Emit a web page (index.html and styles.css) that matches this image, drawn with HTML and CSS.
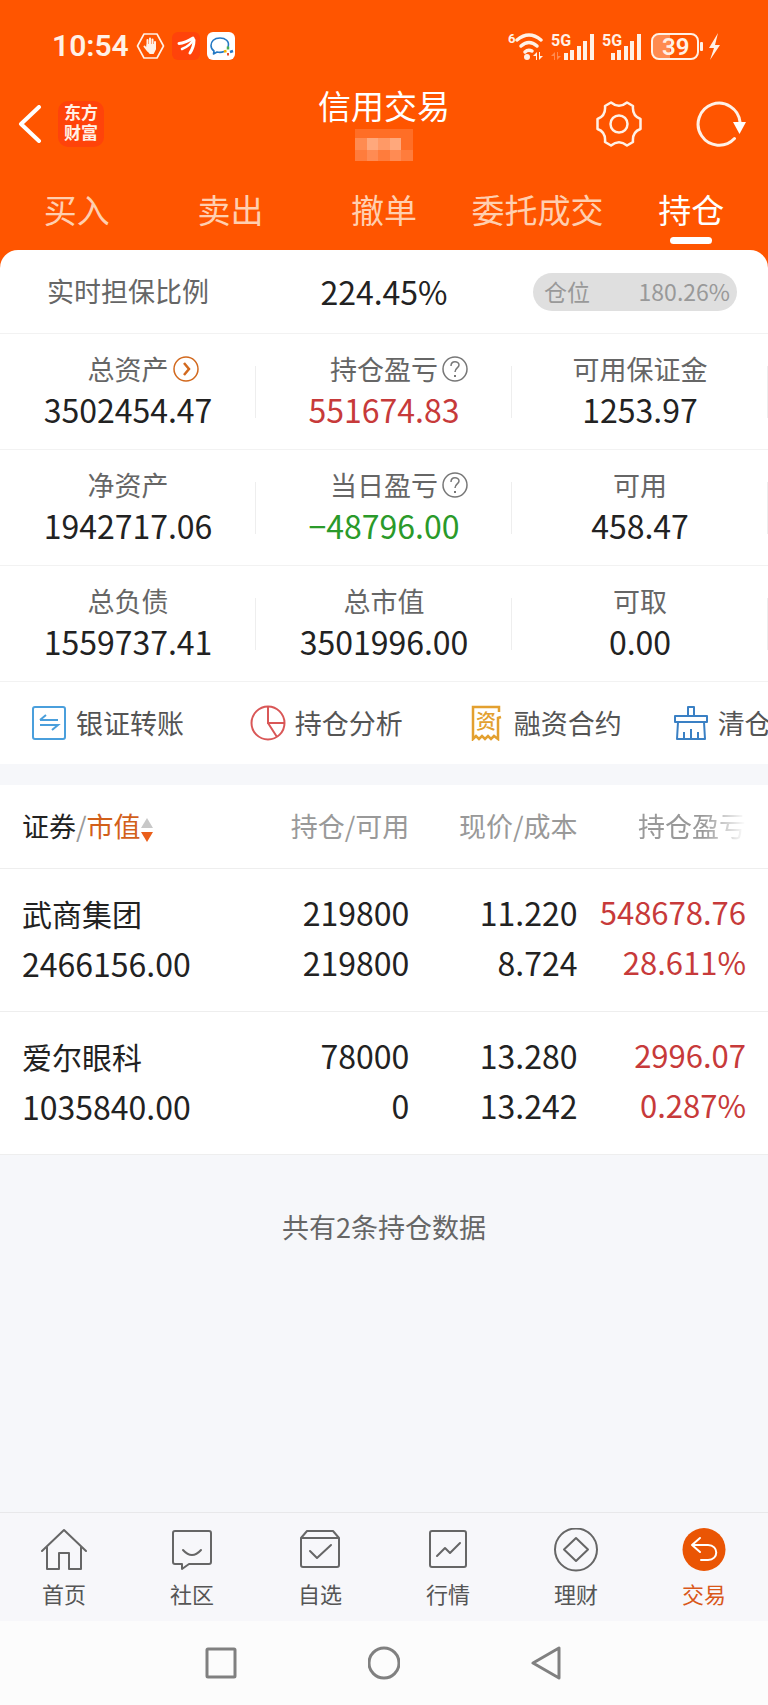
FILE: index.html
```html
<!DOCTYPE html>
<html lang="zh-CN">
<head>
    <meta charset="UTF-8">
    <meta name="viewport" content="width=device-width, initial-scale=1.0">
    <title>信用交易</title>
    <link rel="stylesheet" href="styles.css">
</head>
<body>
    <header class="header">
        <div class="status-bar">
            <div class="status-left">
                <span class="clock">10:54</span>
                <svg width="29" height="28" viewBox="0 0 29 28" fill="none" stroke="#fff1e6" stroke-linejoin="round" stroke-linecap="round">
                    <path d="M8 2h13l6.500 12L21 26H8L1.500 14z" stroke-width="1.600"/>
                    <path d="M11.500 8v7M14 6.500V15M16.500 7.500V15M19 10v6" stroke-width="2"/>
                    <path d="M8.500 14.500l3.500 4.500M11.500 13h7.500v4l-2 4h-3l-3-4z" stroke-width="2" fill="#fff1e6"/>
                </svg>
                <svg width="28" height="28" viewBox="0 0 28 28">
                    <rect width="28" height="28" rx="6" fill="#ff430a"/>
                    <g fill="none" stroke="#fff" stroke-linecap="round">
                        <path d="M7 11.500Q13 11 21 6" stroke-width="3"/>
                        <path d="M10 17Q18 14 21.500 7" stroke-width="2.500"/>
                        <path d="M18 21Q22 15 22 8" stroke-width="3"/>
                    </g>
                </svg>
                <svg width="28" height="28" viewBox="0 0 28 28" fill="none">
                    <rect width="28" height="28" rx="6" fill="#fff"/>
                    <path d="M21 15C23 9 18 6 13 6C7 6 4 9.500 4 13.500c0 3 1.500 4.500 3 5.500l-.5 3l3.500-2c3 .7 5 .4 7-.5" stroke="#2479c4" stroke-width="1.600" stroke-linejoin="round"/>
                    <path d="M21 14.500v3" stroke="#4caf50" stroke-width="2.500"/>
                    <path d="M23 20l3-1" stroke="#2479c4" stroke-width="2.500"/>
                    <path d="M21 21v2.500" stroke="#e8502d" stroke-width="2"/>
                    <path d="M17 19.500l2.500-.5" stroke="#f5b400" stroke-width="2.500"/>
                </svg>
            </div>
            <svg class="status-right" width="214" height="30" viewBox="0 0 214 30" fill="#fff1e6">
                <text x="0" y="12" font-size="13" font-weight="700">6</text>
                <g fill="none" stroke="#fff1e6" stroke-width="3.500" stroke-linecap="round">
                    <path d="M9 9Q21 -1 33 9"/>
                    <path d="M13 15Q21 8 29 15"/>
                    <path d="M17 21Q20 18 24 20"/>
                </g>
                <circle cx="19" cy="26" r="3"/>
                <path d="M25 25l4-4v8h-1v-4zM35 25l-4 4v-8h1v4z"/>
                <text x="43" y="15" font-size="16" font-weight="700">5G</text>
                <path d="M43 25l4-4v8h-1v-4zM53 25l-4 4v-8h1v4z" opacity=".35"/>
                <path d="M56 22h4v7h-4zM62 19h4v10h-4zM69 15h4v14h-4zM75 10h4v19h-4zM82 3h4v26h-4z"/>
                <text x="94" y="15" font-size="16" font-weight="700">5G</text>
                <path d="M103 22h4v7h-4zM109 19h4v10h-4zM116 15h4v14h-4zM122 10h4v19h-4zM129 3h4v26h-4z"/>
                <path d="M151 4h11v24h-11q-6 0-6-6V10q0-6 6-6z" opacity=".35"/>
                <rect x="144" y="3" width="46" height="25" rx="7" fill="none" stroke="#fff1e6" stroke-width="2"/>
                <text x="154" y="24" font-size="24" font-weight="600">39</text>
                <rect x="192" y="11" width="3" height="9" rx="1"/>
                <path d="M210 2l-9 15h5l-4 12l10-15h-5z"/>
            </svg>
        </div>

        <div class="app-bar">
            <div class="app-left">
                <button class="icon-btn" type="button" aria-label="返回">
                    <svg width="24" height="38" viewBox="0 0 24 38" fill="none" stroke="#fff" stroke-width="4" stroke-linecap="round" stroke-linejoin="round">
                        <path d="M21 2L3 19l18 17"/>
                    </svg>
                </button>
                <a class="brand" href="#">东方<br>财富</a>
            </div>
            <div class="app-title">
                <h1>信用交易</h1>
                <svg width="58" height="34" viewBox="0 0 58 34" fill="#fff" shape-rendering="crispEdges">
                    <path d="M0 2h58v32H0z" opacity=".15"/>
                    <path d="M0 11h46v12H0z" opacity=".2"/>
                    <path d="M0 23h58v11H0z" opacity=".1"/>
                    <path d="M12 11h11v12H12zM35 11h11v12H35z" opacity=".25"/>
                    <path d="M23 11h12v12H23zM12 23h11v11H12zM35 23h11v11H35z" opacity=".12"/>
                </svg>
            </div>
            <div class="app-actions">
                <button class="icon-btn" type="button" aria-label="设置">
                    <svg width="46" height="46" viewBox="0 0 46 46" fill="none" stroke="#fff1e6" stroke-width="2.500" stroke-linejoin="round">
                        <path d="M15 1.500Q23 8 31 1.500L37 5Q36 15 44.500 18V28Q36 31 37 41L31 44.500Q23 38 15 44.500L9 41Q10 31 1.500 28V18Q10 15 9 5z"/>
                        <circle cx="23" cy="23" r="8.500"/>
                    </svg>
                </button>
                <button class="icon-btn" type="button" aria-label="刷新">
                    <svg width="50" height="46" viewBox="0 0 50 46">
                        <path d="M38.500 37.500A21 21 0 1 1 44 21" fill="none" stroke="#fff1e6" stroke-width="3" stroke-linecap="round"/>
                        <path d="M37 21h13l-6.500 12z" fill="#fff"/>
                    </svg>
                </button>
            </div>
        </div>

        <nav class="tabs">
            <a href="#">买入</a>
            <a href="#">卖出</a>
            <a href="#">撤单</a>
            <a href="#">委托成交</a>
            <a href="#" class="active">持仓</a>
        </nav>
    </header>

    <main>
        <section class="summary">
            <div class="ratio-row">
                <span class="label">实时担保比例</span>
                <span class="value">224.45%</span>
                <div class="position-cell">
                    <div class="position-pill"><span>仓位</span><span>180.26%</span></div>
                </div>
            </div>
            <div class="stat-row">
                <div class="stat">
                    <div class="label">总资产
                        <svg class="hint" width="26" height="26" viewBox="0 0 26 26" fill="none" stroke="#d2691e">
                            <circle cx="13" cy="13" r="12" stroke-width="1.500"/>
                            <path d="M11 7l5 6l-5 6" stroke-width="2.500"/>
                        </svg>
                    </div>
                    <div class="value">3502454.47</div>
                </div>
                <div class="stat">
                    <div class="label">持仓盈亏
                        <svg class="hint" width="26" height="26" viewBox="0 0 26 26" fill="none" stroke="#777" stroke-width="1.500">
                            <circle cx="13" cy="13" r="12"/>
                            <path d="M9 10c0-6 8-5 8-1c0 3-4 3-4 7"/>
                            <path d="M13 19v2" stroke-width="2"/>
                        </svg>
                    </div>
                    <div class="value up">551674.83</div>
                </div>
                <div class="stat">
                    <div class="label">可用保证金</div>
                    <div class="value">1253.97</div>
                </div>
            </div>
            <div class="stat-row">
                <div class="stat">
                    <div class="label">净资产</div>
                    <div class="value">1942717.06</div>
                </div>
                <div class="stat">
                    <div class="label">当日盈亏
                        <svg class="hint" width="26" height="26" viewBox="0 0 26 26" fill="none" stroke="#777" stroke-width="1.500">
                            <circle cx="13" cy="13" r="12"/>
                            <path d="M9 10c0-6 8-5 8-1c0 3-4 3-4 7"/>
                            <path d="M13 19v2" stroke-width="2"/>
                        </svg>
                    </div>
                    <div class="value down">−48796.00</div>
                </div>
                <div class="stat">
                    <div class="label">可用</div>
                    <div class="value">458.47</div>
                </div>
            </div>
            <div class="stat-row">
                <div class="stat">
                    <div class="label">总负债</div>
                    <div class="value">1559737.41</div>
                </div>
                <div class="stat">
                    <div class="label">总市值</div>
                    <div class="value">3501996.00</div>
                </div>
                <div class="stat">
                    <div class="label">可取</div>
                    <div class="value">0.00</div>
                </div>
            </div>
            <div class="shortcuts">
                <a href="#">
                    <svg width="36" height="36" viewBox="0 0 36 36" fill="none" stroke="#4a9fdc" stroke-width="2">
                        <rect x="2" y="2" width="32" height="32" rx="2"/>
                        <path d="M9 15h18M9 15l6-5M9 20h18l-6 5"/>
                    </svg>
                    银证转账
                </a>
                <a href="#">
                    <svg width="36" height="36" viewBox="0 0 36 36" fill="none" stroke="#d95757" stroke-width="2">
                        <circle cx="18" cy="18" r="16.500"/>
                        <path d="M18 1.500V18h16.500M18 18l9 14"/>
                    </svg>
                    持仓分析
                </a>
                <a href="#">
                    <svg width="36" height="36" viewBox="0 0 36 36" fill="none" stroke="#e3a02f" stroke-width="2.500">
                        <path d="M30 7V2H4v32l3-3l3 3l3-3l3 3l3-3l3 3l3-3l4 3V13l3-1"/>
                        <text x="7" y="24" font-size="20" font-weight="500" fill="#e3a02f" stroke="none">资</text>
                    </svg>
                    融资合约
                </a>
                <a href="#" class="shortcut-last">
                    <svg width="36" height="36" viewBox="0 0 36 36" fill="none" stroke="#3a80c4" stroke-width="2" stroke-linejoin="round">
                        <path d="M15 11V2h6v9M2 11h32v6H2zM5 17L4 34h28L31 17M11 34v-7M18 34V24M25 34v-7"/>
                    </svg>
                    清仓
                </a>
            </div>
        </section>

        <section class="holdings">
            <table>
                <thead>
                    <tr>
                        <th>
                            <span class="strong">证券</span>/<span class="sort">市值</span><svg width="12" height="26" viewBox="0 0 12 26">
                                <path d="M6 1l6 10H0z" fill="#c8c8c8"/>
                                <path d="M0 15h12L6 25z" fill="#ea5f1b"/>
                            </svg>
                        </th>
                        <th>持仓/可用</th>
                        <th>现价/成本</th>
                        <th><span class="fade">持仓盈亏</span></th>
                    </tr>
                </thead>
                <tbody>
                    <tr>
                        <td><span class="name">武商集团</span><br>2466156.00</td>
                        <td>219800<br>219800</td>
                        <td>11.220<br>8.724</td>
                        <td class="up">548678.76<br>28.611%</td>
                    </tr>
                    <tr>
                        <td><span class="name">爱尔眼科</span><br>1035840.00</td>
                        <td>78000<br>0</td>
                        <td>13.280<br>13.242</td>
                        <td class="up">2996.07<br>0.287%</td>
                    </tr>
                </tbody>
            </table>
        </section>
        <p class="total">共有2条持仓数据</p>
    </main>

    <nav class="bottom-nav">
        <a href="#">
            <svg width="46" height="44" viewBox="0 0 46 44">
                <path d="M1 23L23 2l22 21M6 19v22h12V25h10v16h12V19"/>
            </svg>
            首页
        </a>
        <a href="#">
            <svg width="46" height="44" viewBox="0 0 46 44">
                <path d="M6 3h34q2 0 2 2v29q0 2-2 2H20l-7 5v-5H6q-2 0-2-2V5q0-2 2-2z"/>
                <path d="M14 22q9 10 18 0" stroke-width="2"/>
            </svg>
            社区
        </a>
        <a href="#">
            <svg width="46" height="44" viewBox="0 0 46 44">
                <path d="M10 3h26l6 7v27q0 2-2 2H6q-2 0-2-2V10zM4 10h38"/>
                <path d="M13 23l7 7l14-13" stroke-width="2"/>
            </svg>
            自选
        </a>
        <a href="#">
            <svg width="46" height="44" viewBox="0 0 46 44">
                <rect x="5" y="3" width="36" height="36" rx="2"/>
                <path d="M12 28l8-8l5 5l10-10" stroke-width="2"/>
            </svg>
            行情
        </a>
        <a href="#">
            <svg width="46" height="44" viewBox="0 0 46 44">
                <circle cx="23" cy="21.500" r="21"/>
                <path d="M23 10l12 11.500L23 33L11 21.500z"/>
            </svg>
            理财
        </a>
        <a href="#" class="active">
            <svg width="46" height="44" viewBox="0 0 46 44">
                <circle cx="23" cy="21.500" r="21.500" fill="#ea5504" stroke="none"/>
                <path d="M19 10l-8 7l8 7M11 17h16c11 0 11 15 0 15h-7" stroke="#fff" stroke-width="2"/>
            </svg>
            交易
        </a>
    </nav>

    <div class="system-nav">
        <button class="icon-btn" type="button" aria-label="最近任务">
            <svg width="32" height="34" viewBox="0 0 32 34"><rect x="2" y="3" width="28" height="28" rx="1"/></svg>
        </button>
        <button class="icon-btn" type="button" aria-label="主屏幕">
            <svg width="32" height="34" viewBox="0 0 32 34"><circle cx="16" cy="17" r="15"/></svg>
        </button>
        <button class="icon-btn" type="button" aria-label="后退">
            <svg width="32" height="34" viewBox="0 0 32 34"><path d="M28 2v30L2 17z"/></svg>
        </button>
    </div>
</body>
</html>
```
FILE: styles.css
```css
* {
    box-sizing: border-box;
}

body {
    margin: 0;
    min-height: 100vh;
    display: flex;
    flex-direction: column;
    background: #f6f7fa;
    color: #222;
    font-family: "Noto Sans CJK SC", Roboto, sans-serif;
    font-size: 27px;
    line-height: 40px;
    overflow-x: hidden;
}

a {
    color: inherit;
    text-decoration: none;
}

svg {
    display: block;
    flex: none;
}

.icon-btn {
    padding: 0;
    border: none;
    background: none;
    cursor: pointer;
}

/* Header */
.header {
    background: #ff5500;
    color: #fff1e6;
    padding: 31px 0 24px;
}

.status-bar {
    display: flex;
    justify-content: space-between;
    align-items: center;
    height: 30px;
    padding: 0 46px 0 52px;
    font-family: Roboto, sans-serif;
}

.status-left {
    display: flex;
    align-items: center;
    gap: 7px;
}

.clock {
    font-size: 30px;
    font-weight: 600;
}

.app-bar {
    display: grid;
    grid-template-columns: 1fr auto 1fr;
    align-items: center;
    height: 76px;
    margin-top: 25px;
    padding: 0 18px;
}

.app-left {
    display: flex;
    align-items: center;
    gap: 16px;
}

.brand {
    width: 46px;
    height: 46px;
    padding-top: 2px;
    border-radius: 10px;
    background: #ff430a;
    font-family: Roboto, "Noto Sans CJK SC", sans-serif;
    font-size: 17px;
    line-height: 20px;
    font-weight: 700;
    text-align: center;
}

.app-title {
    display: flex;
    flex-direction: column;
    align-items: center;
}

.app-title h1 {
    margin: 0 0 4px;
    font-size: 33px;
    line-height: 36px;
    font-weight: 400;
    color: #fff;
}

.app-actions {
    display: flex;
    justify-content: flex-end;
    gap: 54px;
    padding-right: 4px;
}

.tabs {
    display: grid;
    grid-template-columns: repeat(5, 1fr);
    padding-top: 27px;
    font-size: 33px;
    text-align: center;
}

.tabs a {
    display: flex;
    flex-direction: column;
    align-items: center;
    color: #ffcfb0;
}

.tabs a::after {
    content: "";
    width: 42px;
    height: 7px;
    margin-top: 8px;
    border-radius: 4px;
}

.tabs .active {
    color: #fff;
}

.tabs .active::after {
    background: #fff;
}

/* Account summary */
main {
    flex: 1;
}

.summary {
    margin-top: -18px;
    border-radius: 18px 18px 0 0;
    background: #fff;
    overflow: hidden;
}

.ratio-row,
.stat-row {
    display: grid;
    grid-template-columns: repeat(3, 1fr);
    border-bottom: 1px solid #f2f2f2;
    text-align: center;
}

.ratio-row {
    align-items: center;
    height: 84px;
    padding-bottom: 2px;
}

.position-cell {
    padding: 2px 31px 0 21px;
}

.position-pill {
    display: flex;
    justify-content: space-between;
    height: 38px;
    padding: 0 7px 0 11px;
    border-radius: 19px;
    background: #dfdfdf;
    color: #999;
    font-size: 23px;
    line-height: 36px;
}

.stat {
    padding: 15px 0 20px;
    background: linear-gradient(#eee, #eee) right center / 1px 52px no-repeat;
}

.label {
    color: #666;
}

.stat .label {
    display: flex;
    justify-content: center;
    align-items: center;
}

/* the hint hangs outside so the label text stays centred */
.hint {
    margin: 0 -30px 0 4px;
}

.value {
    font-size: 32px;
}

.up {
    color: #c73a3a;
}

.down {
    color: #2a9a2a;
}

.shortcuts {
    display: flex;
    height: 82px;
    color: #555;
}

.shortcuts a {
    flex: 0 0 28.5%;
    display: flex;
    justify-content: center;
    align-items: center;
    gap: 9px;
    padding-right: 4px;
    white-space: nowrap;
}

.shortcuts .shortcut-last {
    justify-content: flex-start;
    padding-left: 16px;
}

/* Holdings */
.holdings {
    margin-top: 21px;
    background: #fff;
}

.holdings table {
    width: 100%;
    table-layout: fixed;
    border-collapse: collapse;
}

.holdings th {
    height: 83px;
    padding: 0;
    border-bottom: 1px solid #eee;
    color: #999;
    font-weight: 400;
    text-align: right;
}

.holdings th:first-child,
.holdings td:first-child {
    width: 31.4%;
    padding-left: 22px;
    text-align: left;
}

.holdings th:last-child,
.holdings td:last-child {
    width: 24.8%;
    padding-right: 22px;
}

.holdings th svg {
    display: inline-block;
    vertical-align: middle;
}

.strong {
    color: #222;
}

.sort {
    color: #d2601a;
}

.fade {
    -webkit-mask-image: linear-gradient(to right, #000 60%, transparent);
    mask-image: linear-gradient(to right, #000 60%, transparent);
}

.holdings td {
    padding: 18px 0 23px;
    border-bottom: 1px solid #eee;
    font-size: 32px;
    line-height: 50px;
    text-align: right;
}

.holdings .up {
    font-size: 31px;
}

.name {
    font-size: 30px;
}

.total {
    margin: 52px 0;
    color: #666;
    text-align: center;
}

/* Bottom bars */
.bottom-nav {
    display: grid;
    grid-template-columns: repeat(6, 1fr);
    height: 109px;
    padding-top: 15px;
    border-top: 1px solid #e8e8ea;
    background: #f7f7fa;
    color: #555;
    font-size: 22px;
    line-height: 42px;
}

.bottom-nav a {
    display: flex;
    flex-direction: column;
    align-items: center;
}

.bottom-nav svg {
    fill: none;
    stroke: #666;
    stroke-width: 2;
    stroke-linejoin: round;
    stroke-linecap: round;
}

.bottom-nav .active {
    color: #d9581a;
}

.system-nav {
    display: flex;
    justify-content: center;
    align-items: center;
    gap: 131px;
    height: 84px;
    background: #fcfcfc;
}

.system-nav svg {
    fill: none;
    stroke: #808080;
    stroke-width: 3;
    stroke-linejoin: round;
}
```
